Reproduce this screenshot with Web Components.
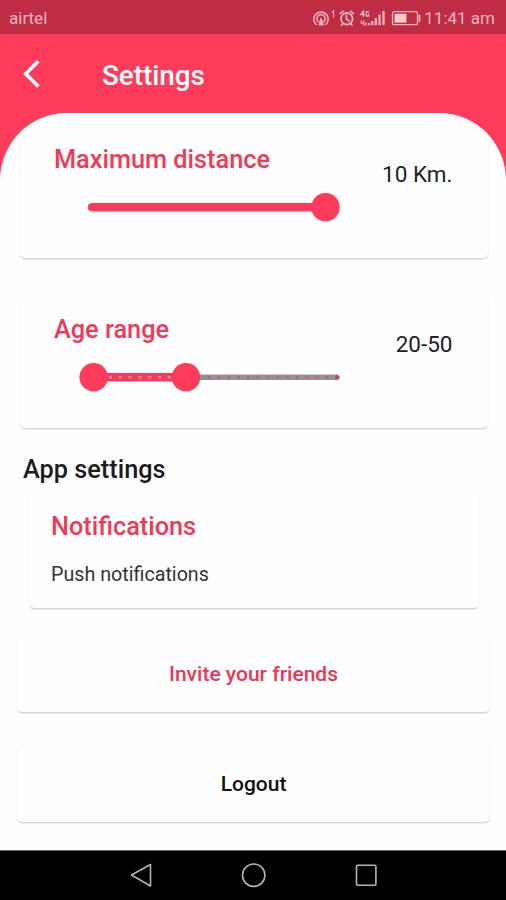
<!DOCTYPE html>
<html lang="en">
<head>
<meta charset="utf-8">
<title>Settings</title>
<style>
  html, body { margin: 0; height: 100%; }
  body { font-family: Roboto, "Liberation Sans", sans-serif; color: #202124; background: #fefefe; overflow: hidden; }
</style>
</head>
<body>
<settings-screen></settings-screen>
<script>
function define(name, html) {
  customElements.define(name, class extends HTMLElement {
    constructor() {
      super();
      this.attachShadow({ mode: 'open' }).innerHTML = html;
    }
  });
}

define('status-bar', `
<style>
  :host { display: flex; height: 34px; box-sizing: border-box; padding: 2px 11px 0 9px; align-items: center; justify-content: space-between; background: #bf2c44; color: #f3b5bf; font-size: 17px; line-height: 32px; }
  .right { display: flex; align-items: center; }
  svg { display: block; margin: -1px 3px 0 0; }
</style>
<span class="carrier">airtel</span>
<div class="right">
  <svg width="110" height="24" viewBox="311 5 110 24" fill="none" stroke="#f3b5bf" stroke-width="1.6" stroke-linecap="round">
    <path d="M316 23.4A7.2 7.2 0 1 1 326 23.4M317.9 20.4A4.1 4.1 0 1 1 324.1 20.4"/>
    <path d="M321 17.5L318.8 24H323.2Z" fill="#f3b5bf" stroke-width="1"/>
    <path d="M332.2 11L333.5 10V16" stroke-width="1.2"/>
    <circle cx="346.8" cy="17.8" r="5.8" stroke-width="1.8"/>
    <path d="M346.4 14.3V18L349 20M340.2 12.7L343.2 10.2M353.4 12.7L350.4 10.2M343 22.5L341.6 24.3M350.7 22.5L352 24.3"/>
    <path d="M363.3 15.5V10.3L360.7 13.7H364.5M368.6 10.8H366.3V15H368.6V13.2" stroke-width="1.3"/>
    <path d="M361.3 20V22.2H363.5M363.8 20V24.3M366 22V24" stroke-width="1.3"/>
    <path d="M369 22V24.2M372.3 20V24.2M375.8 17V24.2M379.5 13.5V24.2M383.5 10V24.2" stroke-width="2.3" stroke-linecap="butt"/>
    <rect x="392.5" y="10.7" width="25" height="13" rx="2" stroke-width="1.3"/>
    <rect x="394.5" y="12.7" width="12" height="9" fill="#f8c9d0" stroke="none"/>
    <path d="M419.5 14.5V20" stroke-width="1.8"/>
  </svg>
  <span class="time">11:41 am</span>
</div>`);

define('app-header', `
<style>
  :host { display: flex; height: 79px; align-items: center; box-sizing: border-box; padding: 3px 0 0 22px; color: #fff; }
  svg { display: block; margin: 0 61px 3px 0; }
  h1 { margin: 1px 0 0; font-size: 27.8px; font-weight: 500; line-height: 33px; }
</style>
<svg width="19" height="30" viewBox="22 59 19 30" fill="none" stroke="#fff" stroke-width="3.6"><path d="M38.3 61.2L25.7 73.8L38.3 86.4"/></svg>
<h1><slot></slot></h1>`);

define('app-card', `
<style>
  :host { display: block; box-sizing: border-box; border-radius: 5px; background: #fefefe; box-shadow: 0 2px 2px -1px rgba(0,0,0,.13), 0 1px 2px rgba(0,0,0,.1); }
</style>
<slot></slot>`);

define('range-setting', `
<style>
  :host { display: flex; justify-content: space-between; height: 130px; box-sizing: border-box; padding: 17px 35px 0 34px; }
  .title { font-size: 25.3px; font-weight: 500; line-height: 30px; color: #f03a59; white-space: nowrap; }
  .track { margin: 17px 0 0 22px; height: 30px; }
  .value { margin-top: 14px; font-size: 22.5px; line-height: 30px; }
</style>
<div>
  <div class="title"><slot name="title"></slot></div>
  <div class="track"><slot name="track"></slot></div>
</div>
<div class="value"><slot name="value"></slot></div>`);

define('distance-slider', `
<style>:host, svg { display: block; }</style>
<svg width="268" height="30" viewBox="76 192 268 30">
  <path d="M92 207.3H325" stroke="#ff3b5b" stroke-width="8.5" stroke-linecap="round"/>
  <circle cx="325.5" cy="207.3" r="14.2" fill="#ff3b5b"/>
</svg>`);

define('age-slider', `
<style>:host, svg { display: block; }</style>
<svg width="268" height="30" viewBox="76 192 268 30">
  <path d="M200 207.3H337" stroke="#959292" stroke-width="5.4" stroke-linecap="round"/>
  <path d="M207.5 207.3H339" stroke="#d05a70" stroke-width="2.6" stroke-dasharray="3 6.8"/>
  <circle cx="337" cy="207.3" r="2" fill="#c84863"/>
  <path d="M94 207.3H186" stroke="#f63b5a" stroke-width="8.5"/>
  <path d="M109 207.3H178" stroke="#cf8d92" stroke-width="2.6" stroke-dasharray="3 6.8"/>
  <circle cx="93.6" cy="207.3" r="14.2" fill="#ff3b5b"/>
  <circle cx="186" cy="207.3" r="14.2" fill="#ff3b5b"/>
</svg>`);

define('notification-setting', `
<style>
  :host { display: flex; flex-direction: column; gap: 17px; height: 117px; box-sizing: border-box; padding: 21px 22px 0; }
  .title { font-size: 25.3px; font-weight: 500; line-height: 30px; color: #f03a59; }
  .sub { font-size: 19.7px; line-height: 32px; color: #333; }
</style>
<div class="title"><slot name="title"></slot></div>
<div class="sub"><slot></slot></div>`);

define('action-row', `
<style>
  :host { display: flex; height: 76px; align-items: center; justify-content: center; font-size: 21px; font-weight: 500; line-height: 28px; }
</style>
<span><slot></slot></span>`);

define('nav-bar', `
<style>
  :host { display: block; height: 50px; box-sizing: border-box; background: #000; border-top: 1px solid #666; }
  svg { display: block; }
</style>
<svg width="506" height="49" viewBox="0 851 506 49" fill="none" stroke="#b4b4b4" stroke-width="1.6" stroke-linejoin="round">
  <path d="M131.5 875L150.5 864.5V886Z"/>
  <circle cx="253.7" cy="875.2" r="11.2"/>
  <rect x="356.5" y="865.2" width="19.4" height="20" rx="1"/>
</svg>`);

define('settings-screen', `
<style>
  :host { display: flex; flex-direction: column; height: 900px; background: linear-gradient(#ff3b5b 200px, #fefefe 200px); }
  main { flex: 1; box-sizing: border-box; padding: 15px 16px 0 17px; background: #fefefe; border-radius: 67px 67px 0 0; overflow: hidden; }
  .range { margin: 0 2.5px 40px 3px; }
  h2 { margin: -13px 0 6px 6px; font-size: 25.3px; font-weight: 500; line-height: 30px; color: #1c1c1f; }
  .note { margin: 0 11px 28px 12px; }
  .invite { margin-bottom: 34px; color: #e83858; }
  .logout { color: #111; }
</style>
<status-bar></status-bar>
<app-header>Settings</app-header>
<main>
  <app-card class="range"><range-setting><span slot="title">Maximum distance</span><distance-slider slot="track"></distance-slider><span slot="value">10 Km.</span></range-setting></app-card>
  <app-card class="range"><range-setting><span slot="title">Age range</span><age-slider slot="track"></age-slider><span slot="value">20-50</span></range-setting></app-card>
  <h2>App settings</h2>
  <app-card class="note"><notification-setting><span slot="title">Notifications</span>Push notifications</notification-setting></app-card>
  <app-card class="invite"><action-row>Invite your friends</action-row></app-card>
  <app-card class="logout"><action-row>Logout</action-row></app-card>
</main>
<nav-bar></nav-bar>`);
</script>
</body>
</html>
